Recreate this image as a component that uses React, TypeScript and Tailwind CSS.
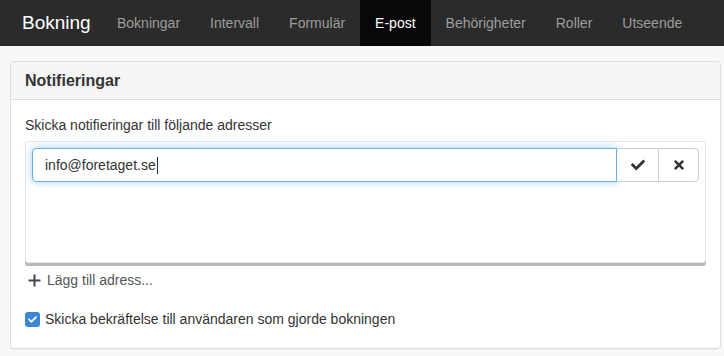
import { FaCheck, FaTimes } from "react-icons/fa";

const tabs = [
  { label: "Bokningar" },
  { label: "Intervall" },
  { label: "Formulär" },
  { label: "E-post", active: true },
  { label: "Behörigheter" },
  { label: "Roller" },
  { label: "Utseende" },
];

export default function App() {
  return (
    <div className="min-h-[356px] bg-[#f8f8f8] font-['Liberation_Sans',Arial,sans-serif] text-[14px] text-[#333]">
      <header className="flex h-[46px] items-stretch bg-[#2b2b2b]">
        <div className="flex w-[102px] items-center pl-[22px] text-[19px] text-white">Bokning</div>
        <nav className="flex items-stretch">
          {tabs.map((t) => (
            <div
              key={t.label}
              className={`flex items-center px-[15px] ${t.active ? "bg-[#080808] text-white" : "text-[#9d9d9d]"}`}
            >
              {t.label}
            </div>
          ))}
        </nav>
      </header>

      <section className="ml-[10px] mr-[3px] mt-[15px] rounded-[4px] border border-[#dddddd] bg-white shadow-[0_1px_1px_rgba(0,0,0,0.05)]">
        <div className="flex h-[38px] items-center rounded-t-[4px] border-b border-[#dddddd] bg-[#f5f5f5] px-[14px] text-[16px] font-bold">
          Notifieringar
        </div>

        <div className="px-[14px] pb-[18px] pt-[15px]">
          <p className="leading-[20px]">Skicka notifieringar till följande adresser</p>

          <div className="mt-[6px] h-[122px] rounded-[3px] border border-[#e8e8e8] bg-white p-[6px] shadow-[0_3px_0_#b8b8b8]">
            <div className="flex h-[34px] rounded-[4px] bg-[#f5f5f5]">
              <div className="flex flex-1 items-center rounded-l-[4px] border border-[#66afe9] bg-white px-[12px] shadow-[0_0_8px_rgba(102,175,233,0.6)]">
                info@foretaget.se<span className="ml-[1px] h-[17px] w-px bg-[#333]" />
              </div>
              <button className="flex w-[41px] items-center justify-center border-y border-[#cccccc] bg-white text-[#333]">
                <FaCheck size={14} />
              </button>
              <button className="flex w-[41px] items-center justify-center rounded-r-[4px] border border-[#cccccc] bg-white text-[#333]">
                <FaTimes size={14} />
              </button>
            </div>
          </div>

          <div className="mt-[7px] flex h-[20px] items-center pl-[3px] text-[#555]">
            <svg width="13" height="13" viewBox="0 0 13 13" className="mr-[6px]">
              <path d="M6.5 0.5v12M0.5 6.5h12" stroke="#444" strokeWidth="2" />
            </svg>
            Lägg till adress...
          </div>

          <label className="mt-[19px] flex items-center">
            <span className="mr-[5px] flex h-[15px] w-[15px] items-center justify-center rounded-[3px] bg-[#3b87d6] text-white">
              <FaCheck size={9} />
            </span>
            Skicka bekräftelse till användaren som gjorde bokningen
          </label>
        </div>
      </section>
    </div>
  );
}
